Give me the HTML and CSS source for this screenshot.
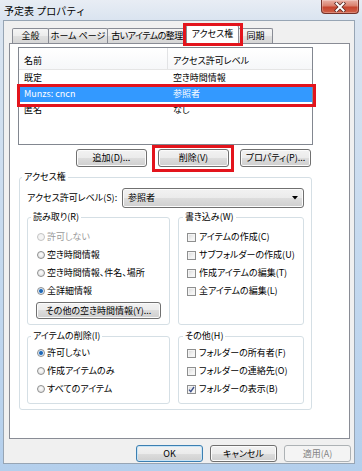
FILE: index.html
```html
<!DOCTYPE html>
<html lang="ja">
<head>
    <meta charset="UTF-8">
    <meta name="viewport" content="width=device-width, initial-scale=1.0">
    <title>予定表 プロパティ</title>
    <link rel="stylesheet" href="styles.css">
</head>
<body>

    <div class="window">

        <!-- Title bar -->
        <div class="titlebar">
            <span class="title">予定表 プロパティ</span>
            <span class="close-btn">
                <svg width="12" height="10" viewBox="0 0 12 10">
                    <path d="M2.5 1.5 L9.5 8.5 M9.5 1.5 L2.5 8.5" stroke="#5a2a24" stroke-width="3.6" stroke-linecap="square"/>
                    <path d="M2.5 1.5 L9.5 8.5 M9.5 1.5 L2.5 8.5" stroke="#fff" stroke-width="2" stroke-linecap="square"/>
                </svg>
            </span>
        </div>

        <div class="client">

            <!-- Tabs -->
            <div class="tabs">
                <div class="tab tab-general">全般</div>
                <div class="tab tab-home">ホーム ページ</div>
                <div class="tab tab-archive">古いアイテムの整理</div>
                <div class="tab tab-access active">アクセス権<span class="mark mark-tab"></span></div>
                <div class="tab tab-sync">同期</div>
            </div>

            <div class="panel">
                <div class="content">

                    <!-- User list -->
                    <div class="listview">
                        <div class="lv-head">
                            <span class="col1">名前</span>
                            <span class="col2">アクセス許可レベル</span>
                        </div>
                        <div class="lv-row">
                            <span class="col1">既定</span>
                            <span class="col2">空き時間情報</span>
                        </div>
                        <div class="lv-row selected">
                            <span class="col1">Munzs: cncn</span>
                            <span class="col2">参照者</span>
                            <span class="mark mark-row"></span>
                        </div>
                        <div class="lv-row">
                            <span class="col1">匿名</span>
                            <span class="col2">なし</span>
                        </div>
                    </div>

                    <div class="lv-buttons">
                        <button class="btn btn-list">追加(D)...</button>
                        <button class="btn btn-list">削除(V)<span class="mark mark-btn"></span></button>
                        <button class="btn btn-list">プロパティ(P)...</button>
                    </div>

                    <!-- Permissions -->
                    <fieldset class="group group-main">
                        <legend>アクセス権</legend>

                        <div class="level-row">
                            <span class="level-label">アクセス許可レベル(S):</span>
                            <div class="combo">
                                <span>参照者</span>
                                <svg width="6" height="4" viewBox="0 0 6 4"><path d="M0 0 H6 L3 3.5 Z" fill="#000"/></svg>
                            </div>
                        </div>

                        <div class="sub-grid">
                            <fieldset class="group sub sub-left">
                                <legend>読み取り(R)</legend>
                                <div class="opts opts-top">
                                    <div class="opt disabled"><span class="radio"></span>許可しない</div>
                                    <div class="opt"><span class="radio"></span>空き時間情報</div>
                                    <div class="opt"><span class="radio"></span>空き時間情報、件名、場所</div>
                                    <div class="opt"><span class="radio on"></span>全詳細情報</div>
                                </div>
                                <button class="btn btn-free">その他の空き時間情報(Y)...</button>
                            </fieldset>

                            <fieldset class="group sub sub-right">
                                <legend>書き込み(W)</legend>
                                <div class="opts opts-top">
                                    <div class="opt"><span class="check"></span>アイテムの作成(C)</div>
                                    <div class="opt"><span class="check"></span>サブフォルダーの作成(U)</div>
                                    <div class="opt"><span class="check"></span>作成アイテムの編集(T)</div>
                                    <div class="opt"><span class="check"></span>全アイテムの編集(L)</div>
                                </div>
                            </fieldset>

                            <fieldset class="group sub sub-left">
                                <legend>アイテムの削除(I)</legend>
                                <div class="opts opts-bottom">
                                    <div class="opt"><span class="radio on"></span>許可しない</div>
                                    <div class="opt"><span class="radio"></span>作成アイテムのみ</div>
                                    <div class="opt"><span class="radio"></span>すべてのアイテム</div>
                                </div>
                            </fieldset>

                            <fieldset class="group sub sub-right">
                                <legend>その他(H)</legend>
                                <div class="opts opts-bottom">
                                    <div class="opt"><span class="check"></span>フォルダーの所有者(F)</div>
                                    <div class="opt"><span class="check"></span>フォルダーの連絡先(O)</div>
                                    <div class="opt">
                                        <span class="check">
                                            <svg width="7" height="7" viewBox="0 0 7 7"><path d="M1 3.6 L2.8 5.6 L6 1" fill="none" stroke="#3b4f8a" stroke-width="1.4"/></svg>
                                        </span>フォルダーの表示(B)
                                    </div>
                                </div>
                            </fieldset>
                        </div>
                    </fieldset>

                </div>
            </div>

            <!-- Dialog buttons -->
            <div class="footer">
                <button class="btn btn-dlg btn-default">OK</button>
                <button class="btn btn-dlg">キャンセル</button>
                <button class="btn btn-dlg" disabled>適用(A)</button>
            </div>

        </div>
    </div>

</body>
</html>
```

FILE: styles.css
```css
* {
    box-sizing: border-box;
}

body {
    margin: 0;
    width: 362px;
    height: 471px;
    overflow: hidden;
    font-family: "Noto Sans CJK JP", "Noto Sans", sans-serif;
    font-size: 9px;
    line-height: 12px;
    color: #000;
    font-feature-settings: "palt";
}

/* Window frame */
.window {
    width: 362px;
    height: 471px;
    display: flex;
    flex-direction: column;
    background: linear-gradient(to bottom, #e8edf4 0, #dae4f0 20px, #c6daef 50%, #b4cfec 100%);
}

.titlebar {
    height: 20px;
    flex-shrink: 0;
    display: flex;
    justify-content: space-between;
    align-items: flex-start;
}

.title {
    margin: 4px 0 0 4px;
    font-size: 10px;
    line-height: 14px;
    font-feature-settings: normal;
}

.close-btn {
    width: 38px;
    height: 14px;
    margin-right: 3px;
    border: 1px solid #74322a;
    border-top: none;
    border-radius: 0 0 4px 4px;
    background: linear-gradient(to bottom, #eab2a6 0, #d9806d 45%, #c6442d 55%, #d0624a 100%);
    box-shadow: inset 0 0 0 1px rgba(255, 255, 255, 0.25);
    display: flex;
    align-items: center;
    justify-content: center;
}

.client {
    margin: 0 7px 7px 3px;
    height: 444px;
    border: 1px solid #97a5b4;
    background: #f0f0f0;
}

/* Tabs */
.tabs {
    display: flex;
    align-items: flex-end;
    height: 18px;
    margin: 4px 0 0 8px;
}

.tab {
    height: 15px;
    margin-left: -1px;
    border: 1px solid #898c95;
    border-bottom: none;
    border-radius: 2px 2px 0 0;
    background: linear-gradient(to bottom, #f5f5f5 0, #ececec 50%, #e0e0e0 50%, #d6d6d6 100%);
    text-align: center;
    line-height: 14px;
    white-space: nowrap;
    overflow: hidden;
}

.tab:first-child {
    margin-left: 0;
}

.tab-general { width: 37px; }
.tab-home { width: 60px; }
.tab-archive { width: 80px; letter-spacing: -0.5px; }
.tab-access { width: 53px; }
.tab-sync { width: 35px; }

.tab.active {
    position: relative;
    z-index: 1;
    height: 19px;
    margin-bottom: -1px;
    background: #fff;
    line-height: 15px;
    overflow: visible;
}

/* Red annotation boxes */
.mark {
    position: absolute;
    border: 3px solid #e3141c;
    pointer-events: none;
    z-index: 2;
}

.mark-tab {
    left: -4px;
    right: -5px;
    top: -3px;
    bottom: -2px;
}

.mark-row {
    left: -2px;
    right: -4px;
    top: -2px;
    bottom: -5px;
}

.mark-btn {
    left: -7px;
    right: -6px;
    top: -5px;
    bottom: -6px;
}

/* Tab page */
.panel {
    margin-left: 5px;
    width: 341px;
    height: 396px;
    border: 1px solid #898c95;
    background: #fff;
    padding: 3px 0 0 8px;
}

.content {
    width: 295px;
}

/* List view */
.listview {
    position: relative;
    height: 98px;
    border: 1px solid #828790;
    background: #fff;
}

.lv-head {
    display: flex;
    height: 22px;
    border-bottom: 1px solid #e5e5e5;
    background: linear-gradient(to bottom, #fff, #f6f7f9);
}

.lv-head span {
    padding-top: 7px;
}

.col1 {
    width: 149px;
    padding-left: 5px;
    white-space: nowrap;
}

.lv-head .col1 {
    border-right: 1px solid #e2e3e5;
}

.col2 {
    padding-left: 5px;
    white-space: nowrap;
}

.lv-row {
    position: relative;
    display: flex;
    height: 16px;
    line-height: 16px;
}

.lv-row.selected {
    background: #3399ff;
    color: #fff;
}

.lv-buttons {
    display: flex;
    justify-content: flex-end;
    gap: 11px;
    margin: 4px 2px 0 0;
}

/* Buttons */
.btn {
    position: relative;
    height: 18px;
    padding: 0;
    border: 1px solid #707070;
    border-radius: 3px;
    background: linear-gradient(to bottom, #f2f2f2 0, #ebebeb 50%, #dddddd 50%, #cfcfcf 100%);
    box-shadow: inset 0 0 0 1px #fbfbfb;
    font-family: inherit;
    font-size: 9px;
    line-height: 14px;
    color: #000;
    font-feature-settings: "palt";
    white-space: nowrap;
}

.btn-list {
    width: 71px;
}

.btn-free {
    display: block;
    width: 125px;
    height: 17px;
    margin: 2px 0 0 -1px;
}

.btn-dlg {
    width: 67px;
    height: 17px;
}

.btn-default {
    border-color: #3c7fb1;
    box-shadow: inset 0 0 0 1px #c8e4f6;
}

.btn:disabled {
    border-color: #adb2b5;
    background: #f4f4f4;
    box-shadow: none;
    color: #838383;
}

/* Group boxes */
.group {
    margin: 0;
    min-width: 0;
    border: 1px solid #d5dfe5;
    border-radius: 3px;
}

.group legend {
    padding: 0 2px;
    line-height: 12px;
}

.group-main {
    width: 293px;
    margin: 4px 0 0 1px;
    padding: 0 7px 5px 7px;
}

.group-main > legend {
    margin-left: -5px;
}

.level-row {
    display: flex;
    align-items: center;
    height: 20px;
    margin-top: 5px;
}

.level-label {
    width: 95px;
    white-space: nowrap;
}

.combo {
    width: 182px;
    height: 20px;
    display: flex;
    justify-content: space-between;
    align-items: center;
    padding: 0 5px;
    border: 1px solid #707070;
    border-radius: 3px;
    background: linear-gradient(to bottom, #f2f2f2 0, #ebebeb 50%, #dddddd 50%, #cfcfcf 100%);
    box-shadow: inset 0 0 0 1px #fbfbfb;
}

.sub-grid {
    display: grid;
    grid-template-columns: 143px 126px;
    column-gap: 8px;
    row-gap: 5px;
    margin-top: 3px;
}

.sub-left {
    padding: 0 8px 5px 9px;
}

.sub-left > legend {
    margin-left: -6px;
}

.sub-right {
    padding: 0 6px 5px 8px;
}

.sub-right > legend {
    margin-left: -4px;
}

.opts-top {
    margin-top: 5px;
}

.opts-bottom {
    margin-top: 2px;
}

.opt {
    display: flex;
    align-items: center;
    height: 18px;
    white-space: nowrap;
}

.opt.disabled {
    color: #9a9a9a;
}

/* Radio buttons */
.radio {
    width: 8px;
    height: 8px;
    margin-right: 2px;
    flex-shrink: 0;
    border: 1px solid #8e8f8f;
    border-radius: 50%;
    background: radial-gradient(circle at 50% 40%, #fdfdfd 0, #e6e6e6 70%, #d4d4d4 100%);
}

.radio.on {
    background: radial-gradient(circle, #1b5aa0 0, #2f78c6 1.6px, #dbe7f4 2.4px, #eef3f8 100%);
}

.disabled .radio {
    border-color: #c3c3c3;
    background: #f4f4f4;
}

/* Check boxes */
.check {
    width: 9px;
    height: 9px;
    margin-right: 3px;
    flex-shrink: 0;
    display: flex;
    align-items: center;
    justify-content: center;
    border: 1px solid #8e8f8f;
    background: linear-gradient(135deg, #d8d8d8 0, #f2f2f2 60%, #fbfbfb 100%);
    box-shadow: inset 0 0 0 1px #f4f4f4;
}

/* Dialog footer */
.footer {
    display: flex;
    justify-content: flex-end;
    gap: 7px;
    margin: 6px 3px 0 0;
}
```
